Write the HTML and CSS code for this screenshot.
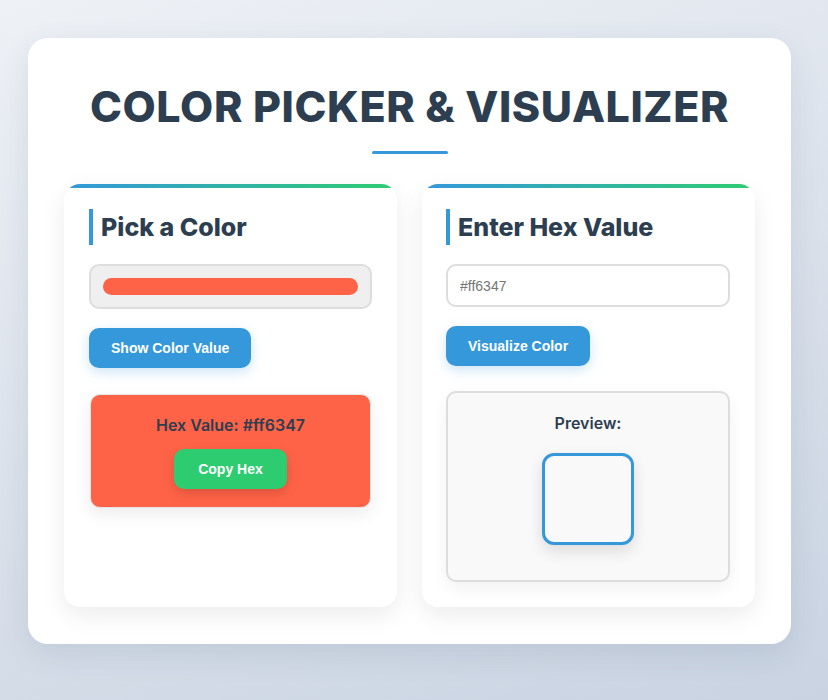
FILE: index.html
```html
<!DOCTYPE html>
<html lang="en">
<head>
    <meta charset="UTF-8">
    <meta name="viewport" content="width=device-width, initial-scale=1.0">
    <title>Color Picker &amp; Visualizer</title>
    <link rel="stylesheet" href="styles.css">
</head>
<body>

    <div class="app-container">
        <h1 class="app-title">Color Picker &amp; Visualizer</h1>
        <div class="title-bar"></div>

        <div class="panels">
            <!-- Picker panel -->
            <div class="panel">
                <h2 class="panel-heading">Pick a Color</h2>
                <div class="color-input">
                    <div class="color-swatch"></div>
                </div>
                <button class="btn btn-blue">Show Color Value</button>
                <div class="result-box">
                    <p class="result-text">Hex Value: #ff6347</p>
                    <button class="btn btn-green">Copy Hex</button>
                </div>
            </div>

            <!-- Hex panel -->
            <div class="panel">
                <h2 class="panel-heading">Enter Hex Value</h2>
                <input class="hex-input" type="text" placeholder="#ff6347">
                <button class="btn btn-blue">Visualize Color</button>
                <div class="preview-box">
                    <p class="result-text">Preview:</p>
                    <div class="preview-swatch"></div>
                </div>
            </div>
        </div>
    </div>

</body>
</html>
```

FILE: styles.css
```css
html, body {
    margin: 0;
    min-height: 100%;
}

body {
    height: 700px;
    background: linear-gradient(160deg, #eef1f6 0%, #d9e0ea 55%, #c9d3e2 100%);
    font-family: "Liberation Sans", Arial, sans-serif;
    padding-top: 38px;
    box-sizing: border-box;
}

.app-container {
    width: 763px;
    margin-left: 28px;
    box-sizing: border-box;
    background: #ffffff;
    border-radius: 20px;
    padding: 36px 36px 37px;
    box-shadow: 0 10px 30px rgba(60, 80, 110, 0.12);
}

.app-title {
    margin: 0;
    text-align: center;
    white-space: nowrap;
    font-family: Inter, "Noto Sans", sans-serif;
    font-weight: 800;
    font-size: 43px;
    line-height: 64px;
    letter-spacing: 0.6px;
    text-transform: uppercase;
    color: #2c3e50;
}

.title-bar {
    width: 76px;
    height: 3px;
    margin: 13px auto 30px;
    border-radius: 2px;
    background: #3498db;
}

.panels {
    display: grid;
    grid-template-columns: 1fr 1fr;
    gap: 25px;
}

.panel {
    position: relative;
    background: #ffffff;
    border-radius: 16px;
    padding: 25px 25px 25px 24px;
    box-shadow: 0 8px 24px rgba(0, 0, 0, 0.08);
    overflow: hidden;
}

.panel:first-child {
    padding-left: 25px;
}

.panel::before {
    content: "";
    position: absolute;
    top: 0;
    left: 0;
    right: 0;
    height: 4px;
    background: linear-gradient(90deg, #3498db, #2ecc71);
}

.panel-heading {
    margin: 0 0 19px;
    padding-left: 8px;
    border-left: 4px solid #3498db;
    font-family: Inter, "Noto Sans", sans-serif;
    font-weight: 800;
    font-size: 25px;
    line-height: 36px;
    color: #2c3e50;
}

.color-input {
    height: 45px;
    box-sizing: border-box;
    border: 2px solid #dddddd;
    border-radius: 10px;
    background: #efefef;
    padding: 12px 12px;
}

.color-swatch {
    height: 17px;
    border-radius: 9px;
    background: #ff6347;
}

.hex-input {
    display: block;
    width: 100%;
    height: 43px;
    box-sizing: border-box;
    border: 2px solid #dddddd;
    border-radius: 10px;
    padding: 0 12px;
    font-family: "Liberation Sans", Arial, sans-serif;
    font-size: 14px;
    color: #333333;
    background: #ffffff;
}

.hex-input::placeholder {
    color: #757575;
}

.btn {
    display: block;
    height: 40px;
    padding: 0 22px;
    border: none;
    border-radius: 10px;
    font-family: "Liberation Sans", Arial, sans-serif;
    font-weight: bold;
    font-size: 14px;
    color: #ffffff;
    cursor: pointer;
}

.btn-blue {
    margin-top: 19px;
    background: #3498db;
    box-shadow: 0 4px 12px rgba(52, 152, 219, 0.25);
}

.btn-green {
    margin: 0 auto;
    padding: 0 24px;
    background: #2ecc71;
    box-shadow: 0 4px 12px rgba(0, 0, 0, 0.15);
}

.result-box {
    margin-top: 26px;
    margin-left: 1px;
    margin-right: 1px;
    padding: 18px 0 18px;
    border: 1px solid #e6e6e6;
    border-radius: 10px;
    background: #ff6347;
    text-align: center;
    box-shadow: 0 6px 18px rgba(0, 0, 0, 0.08);
}

.result-text {
    margin: 0 0 12px;
    font-family: Inter, "Noto Sans", sans-serif;
    font-weight: 600;
    font-size: 16px;
    line-height: 24px;
    color: #2c3e50;
}

.preview-box {
    margin-top: 25px;
    padding: 18px 0 35px;
    border: 2px solid #dddddd;
    border-radius: 10px;
    background: #f9f9f9;
    text-align: center;
    box-shadow: 0 6px 18px rgba(0, 0, 0, 0.06);
}

.preview-box .result-text {
    margin-bottom: 18px;
}

.preview-swatch {
    width: 86px;
    height: 86px;
    margin: 0 auto;
    border: 3px solid #3498db;
    border-radius: 12px;
    background: #f9f9f9;
    box-shadow: 0 6px 16px rgba(0, 0, 0, 0.12);
}
```
